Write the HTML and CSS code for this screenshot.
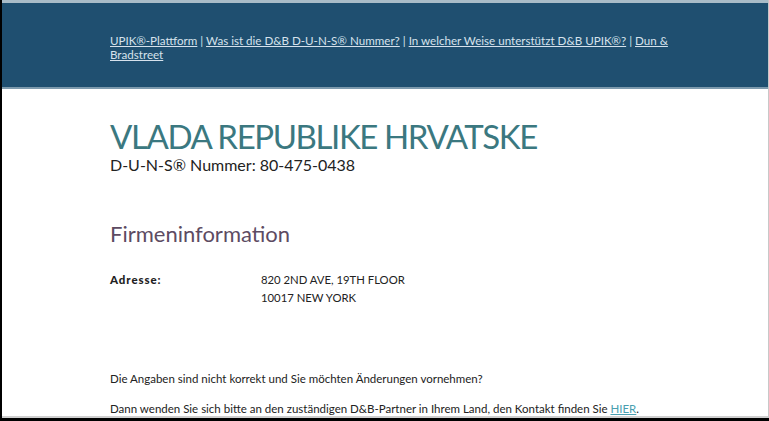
FILE: index.html
```html
<!DOCTYPE html>
<html lang="de">
<head>
<meta charset="utf-8">
<title>VLADA REPUBLIKE HRVATSKE - UPIK</title>
<link rel="stylesheet" href="styles.css">
</head>
<body>
<div class="frame">
  <header class="topbar">
    <nav class="nav">
      <a href="#">UPIK®-Plattform</a> <span class="sep">|</span> <a href="#">Was ist die D&amp;B D-U-N-S® Nummer?</a> <span class="sep">|</span> <a href="#">In welcher Weise unterstützt D&amp;B UPIK®?</a> <span class="sep">|</span> <a href="#"><span>Dun &amp;</span> <span>Bradstreet</span></a>
    </nav>
  </header>
  <main class="content">
    <h1 class="company">VLADA REPUBLIKE HRVATSKE</h1>
    <p class="duns">D-U-N-S® Nummer: 80-475-0438</p>
    <h2 class="section">Firmeninformation</h2>
    <div class="info">
      <div class="label">Adresse:</div>
      <div class="value">820 2ND AVE, 19TH FLOOR<br>10017 NEW YORK</div>
    </div>
    <p class="note">Die Angaben sind nicht korrekt und Sie möchten Änderungen vornehmen?</p>
    <p class="note note2">Dann wenden Sie sich bitte an den zuständigen D&amp;B-Partner in Ihrem Land, den Kontakt finden Sie <a href="#" class="hier">HIER</a>.</p>
  </main>
</div>
</body>
</html>
```
FILE: styles.css
```css
html, body {
  margin: 0;
  padding: 0;
  background: #000;
}
.frame {
  width: 766px;
  height: 418px;
  margin-left: 2px;
  background: #fff;
  overflow: hidden;
  border-right: 1px solid #c8c8c8;
  font-family: Lato, "Liberation Sans", sans-serif;
  display: flex;
  flex-direction: column;
}
.topbar {
  background: #1f4f70;
  border-top: 3px solid #a9bcc8;
  border-bottom: 2px solid #7d9aad;
  height: 84px;
  box-sizing: content-box;
  padding: 0 0 0 108px;
  flex: none;
}
.nav {
  width: 580px;
  padding-top: 31px;
  font-size: 11.6px;
  line-height: 14px;
  color: #d6e2ec;
}
.nav a {
  color: #d6e2ec;
  text-decoration: underline;
}
.sep { color: #d6e2ec; }
.content {
  flex: 1;
  min-height: 0;
  padding: 0 0 0 108px;
  border-bottom: 2px solid #cfcfcf;
}
.company {
  margin: 28px 0 0;
  font-size: 33px;
  font-weight: 400;
  letter-spacing: -1.4px;
  line-height: 38px;
  color: #3b7880;
}
.duns {
  margin: 0;
  font-size: 16px;
  line-height: 20px;
  color: #222;
}
.section {
  margin: 45px 0 0;
  font-size: 22px;
  font-weight: 400;
  line-height: 28px;
  color: #5d4b62;
}
.info {
  display: grid;
  grid-template-columns: 151px auto;
  margin-top: 23px;
  font-size: 11.3px;
  line-height: 18px;
  color: #222;
}
.label { font-weight: 900; font-size: 11.5px; letter-spacing: 0.9px; }
.note {
  margin: 64px 0 0;
  font-size: 11.5px;
  line-height: 15px;
  color: #222;
}
.note2 { margin-top: 15px; }
.hier { color: #4a9fb0; text-decoration: underline; }
```
